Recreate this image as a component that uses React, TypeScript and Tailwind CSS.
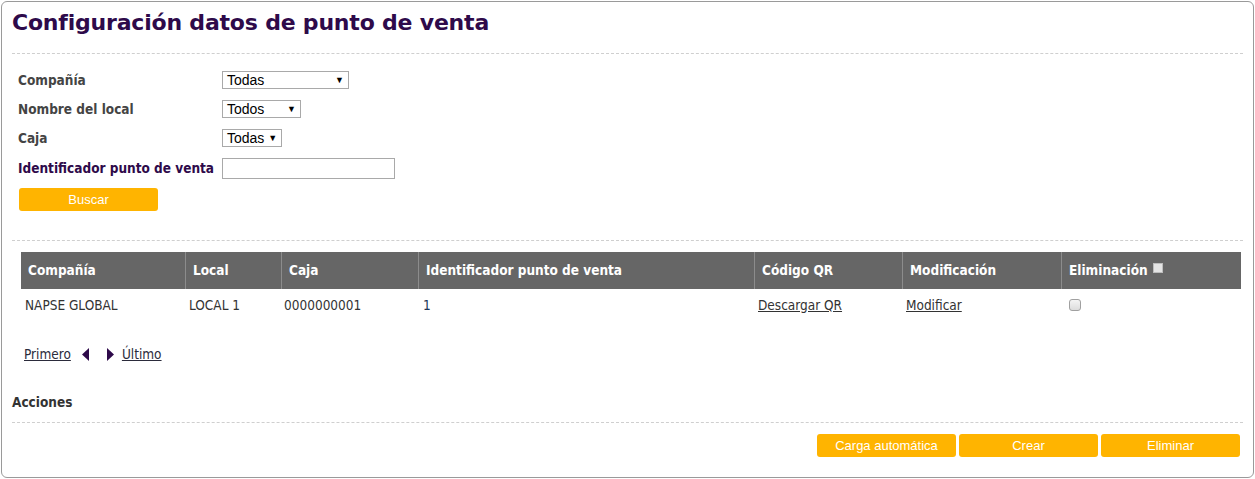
const condensed = { fontFamily: '"DejaVu Sans Condensed", "DejaVu Sans", sans-serif' };
const arial = { fontFamily: '"Liberation Sans", Arial, sans-serif' };

function Select({ value, width }: { value: string; width: string }) {
  return (
    <div
      className={`${width} h-[18px] border border-[#a9a9a9] bg-white flex items-center justify-between gap-[4px] pl-[4px] pr-[4px] text-[14px] leading-none text-black`}
      style={arial}
    >
      <span>{value}</span>
      <span className="text-[9px] leading-none">▼</span>
    </div>
  );
}

function Divider() {
  return <div className="h-0 border-t border-dashed border-[#cfcfcf]" />;
}

function YButton({ label, className = "" }: { label: string; className?: string }) {
  return (
    <div
      className={`h-[23px] w-[139px] rounded-[3px] bg-[#ffb400] text-white text-[13px] flex items-center justify-center ${className}`}
      style={arial}
    >
      {label}
    </div>
  );
}

function Checkbox({ small = false }: { small?: boolean }) {
  return small ? (
    <span className="inline-block w-[10px] h-[10px] bg-[#e4e4e4] border border-[#bdbdbd]" />
  ) : (
    <span className="inline-block w-[12px] h-[12px] rounded-[3px] border border-[#a0a0a0] bg-gradient-to-b from-[#f4f4f4] to-[#dcdcdc]" />
  );
}

const cols = [
  { h: "Compañía", w: "w-[164px]" },
  { h: "Local", w: "w-[96px]" },
  { h: "Caja", w: "w-[137px]" },
  { h: "Identificador punto de venta", w: "w-[336px]" },
  { h: "Código QR", w: "w-[148px]" },
  { h: "Modificación", w: "w-[159px]" },
  { h: "Eliminación", w: "w-[180px]" },
];

export default function App() {
  return (
    <div className="w-[1255px] h-[479px] bg-white pl-[1px] pt-[1px]">
      <div className="w-[1253px] h-[477px] border border-[#9a9a9a] rounded-[6px] px-[10px]">
        <div className="h-[51px] pt-[8px]">
          <h1
            className="text-[22px] leading-[26px] font-bold text-[#2e0a4a] tracking-[-0.2px] whitespace-nowrap"
            style={{ fontFamily: '"DejaVu Sans", Verdana, sans-serif' }}
          >
            Configuración datos de punto de venta
          </h1>
        </div>
        <Divider />

        <div className="mt-[17px] pl-[6px] flex flex-col gap-[11px]" style={condensed}>
          {[
            { l: "Compañía", c: <Select value="Todas" width="w-[127px]" /> },
            { l: "Nombre del local", c: <Select value="Todos" width="w-[79px]" /> },
            { l: "Caja", c: <Select value="Todas" width="w-[60px]" /> },
          ].map((r) => (
            <div key={r.l} className="flex items-center h-[18px]">
              <div className="w-[204px] text-[13.5px] font-bold text-[#444] whitespace-nowrap">{r.l}</div>
              {r.c}
            </div>
          ))}
          <div className="flex items-center h-[20px]">
            <div className="w-[204px] text-[13.5px] font-bold text-[#2e0a4a] whitespace-nowrap">
              Identificador punto de venta
            </div>
            <div className="w-[173px] h-[21px] border border-[#a9a9a9] bg-white" />
          </div>
        </div>
        <YButton label="Buscar" className="ml-[7px] mt-[10px]" />

        <div className="mt-[29px]">
          <Divider />
        </div>

        <div className="mt-[11px] ml-[9px] w-[1220px]" style={condensed}>
          <div className="flex h-[37px] bg-[#666666] text-white text-[13.5px] font-bold">
            {cols.map((c, i) => (
              <div
                key={c.h}
                className={`${c.w} flex items-center pl-[7px] whitespace-nowrap ${i > 0 ? "border-l border-[#8c8c8c]" : ""}`}
              >
                {c.h}
                {i === 6 && (
                  <span className="ml-[5px] -mt-[6px] flex">
                    <Checkbox small />
                  </span>
                )}
              </div>
            ))}
          </div>
          <div className="flex h-[32px] text-[13.5px] text-[#333]">
            <div className="w-[164px] flex items-center pl-[4px]">NAPSE GLOBAL</div>
            <div className="w-[96px] flex items-center pl-[4px]">LOCAL 1</div>
            <div className="w-[137px] flex items-center pl-[3px]">0000000001</div>
            <div className="w-[336px] flex items-center pl-[5px] text-[#1d3658]">1</div>
            <div className="w-[148px] flex items-center pl-[4px]">
              <span className="underline">Descargar QR</span>
            </div>
            <div className="w-[159px] flex items-center pl-[4px]">
              <span className="underline">Modificar</span>
            </div>
            <div className="w-[180px] flex items-center pl-[8px]">
              <Checkbox />
            </div>
          </div>

          <div className="mt-[23px] h-[20px] flex items-center pl-[3px] text-[13.5px] text-[#2b2b3b]">
            <span className="underline">Primero</span>
            <svg width="7" height="13" viewBox="0 0 7 13" className="ml-[11px]">
              <polygon points="7,0 7,13 0,6.5" fill="#2e0a4a" />
            </svg>
            <svg width="7" height="13" viewBox="0 0 7 13" className="ml-[18px]">
              <polygon points="0,0 0,13 7,6.5" fill="#2e0a4a" />
            </svg>
            <span className="underline ml-[8px]">Último</span>
          </div>
        </div>

        <div className="mt-[28px] h-[20px] flex items-center text-[13.5px] font-bold text-[#333]" style={condensed}>
          Acciones
        </div>
        <div className="mt-[10px]">
          <Divider />
        </div>
        <div className="mt-[11px] flex justify-end gap-[3px] pr-[3px]">
          <YButton label="Carga automática" />
          <YButton label="Crear" />
          <YButton label="Eliminar" />
        </div>
      </div>
    </div>
  );
}
